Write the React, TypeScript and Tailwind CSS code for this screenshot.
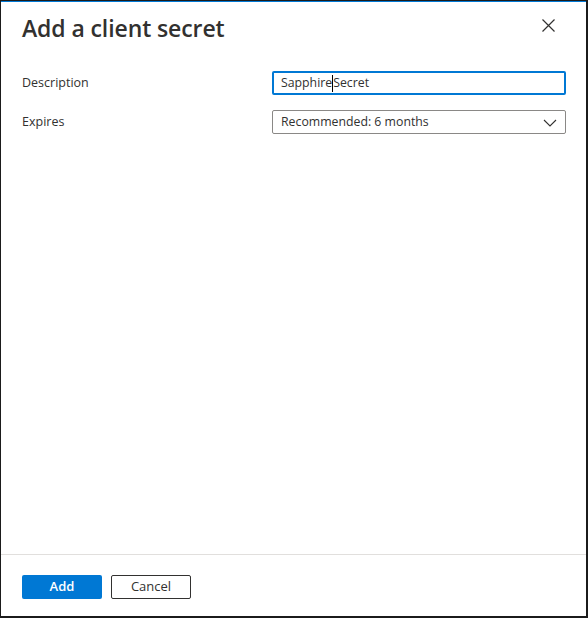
import React from "react";

export default function App() {
  const font = { fontFamily: '"Open Sans", "Noto Sans", Arial, sans-serif' };
  return (
    <div
      className="w-[588px] h-[618px] bg-white flex flex-col border-l border-l-[#1b1b1b] border-r-2 border-r-[#1b1b1b] border-b-2 border-b-[#1b1b1b] border-t border-t-[#1b1b1b] text-[#323130]"
      style={font}
    >
      <div className="h-[1px] bg-[#0078d4]" />
      <div className="flex-1 flex flex-col">
        <div className="flex items-start justify-between pl-[21px] pr-[30px] pt-[10px]">
          <h1 className="text-[23px] leading-[32px] font-semibold tracking-[-0.1px]">Add a client secret</h1>
          <svg width="13" height="13" viewBox="0 0 13 13" className="mt-[7px] mr-[1px]">
            <path d="M0.5 0.5 L12.5 12.5 M12.5 0.5 L0.5 12.5" stroke="#323130" strokeWidth="1.2" fill="none" />
          </svg>
        </div>
        <div className="flex flex-col gap-[15px] pl-[21px] pr-[20px] mt-[27px]">
          <div className="flex items-center">
            <label className="w-[250px] text-[12.5px] pt-[1px]">Description</label>
            <div className="flex-1 h-[24px] border-2 border-[#0078d4] rounded-[2px] flex items-center px-[7px] pt-[1px] text-[12.3px] text-[#323130]">
              <span>Sapphire</span>
              <span className="w-[1px] h-[17px] bg-[#000]" />
              <span>Secret</span>
            </div>
          </div>
          <div className="flex items-center">
            <label className="w-[250px] text-[12.5px] pt-[1px]">Expires</label>
            <div className="flex-1 h-[24px] border border-[#8a8886] rounded-[2px] flex items-center justify-between pl-[8px] pr-[8px] pt-[1px] text-[12.3px]">
              <span>Recommended: 6 months</span>
              <svg width="14" height="8" viewBox="0 0 14 8">
                <path d="M1 1 L7 7 L13 1" stroke="#323130" strokeWidth="1.1" fill="none" />
              </svg>
            </div>
          </div>
        </div>
      </div>
      <div className="border-t border-t-[#e1dfdd] h-[62px] flex items-start gap-[9px] pl-[21px] pt-[20px]">
        <button className="w-[80px] h-[24px] bg-[#0078d4] text-white text-[13px] font-semibold rounded-[2px]">Add</button>
        <button className="w-[80px] h-[24px] border border-[#323130] text-[#323130] text-[13px] rounded-[2px] bg-white">Cancel</button>
      </div>
    </div>
  );
}
